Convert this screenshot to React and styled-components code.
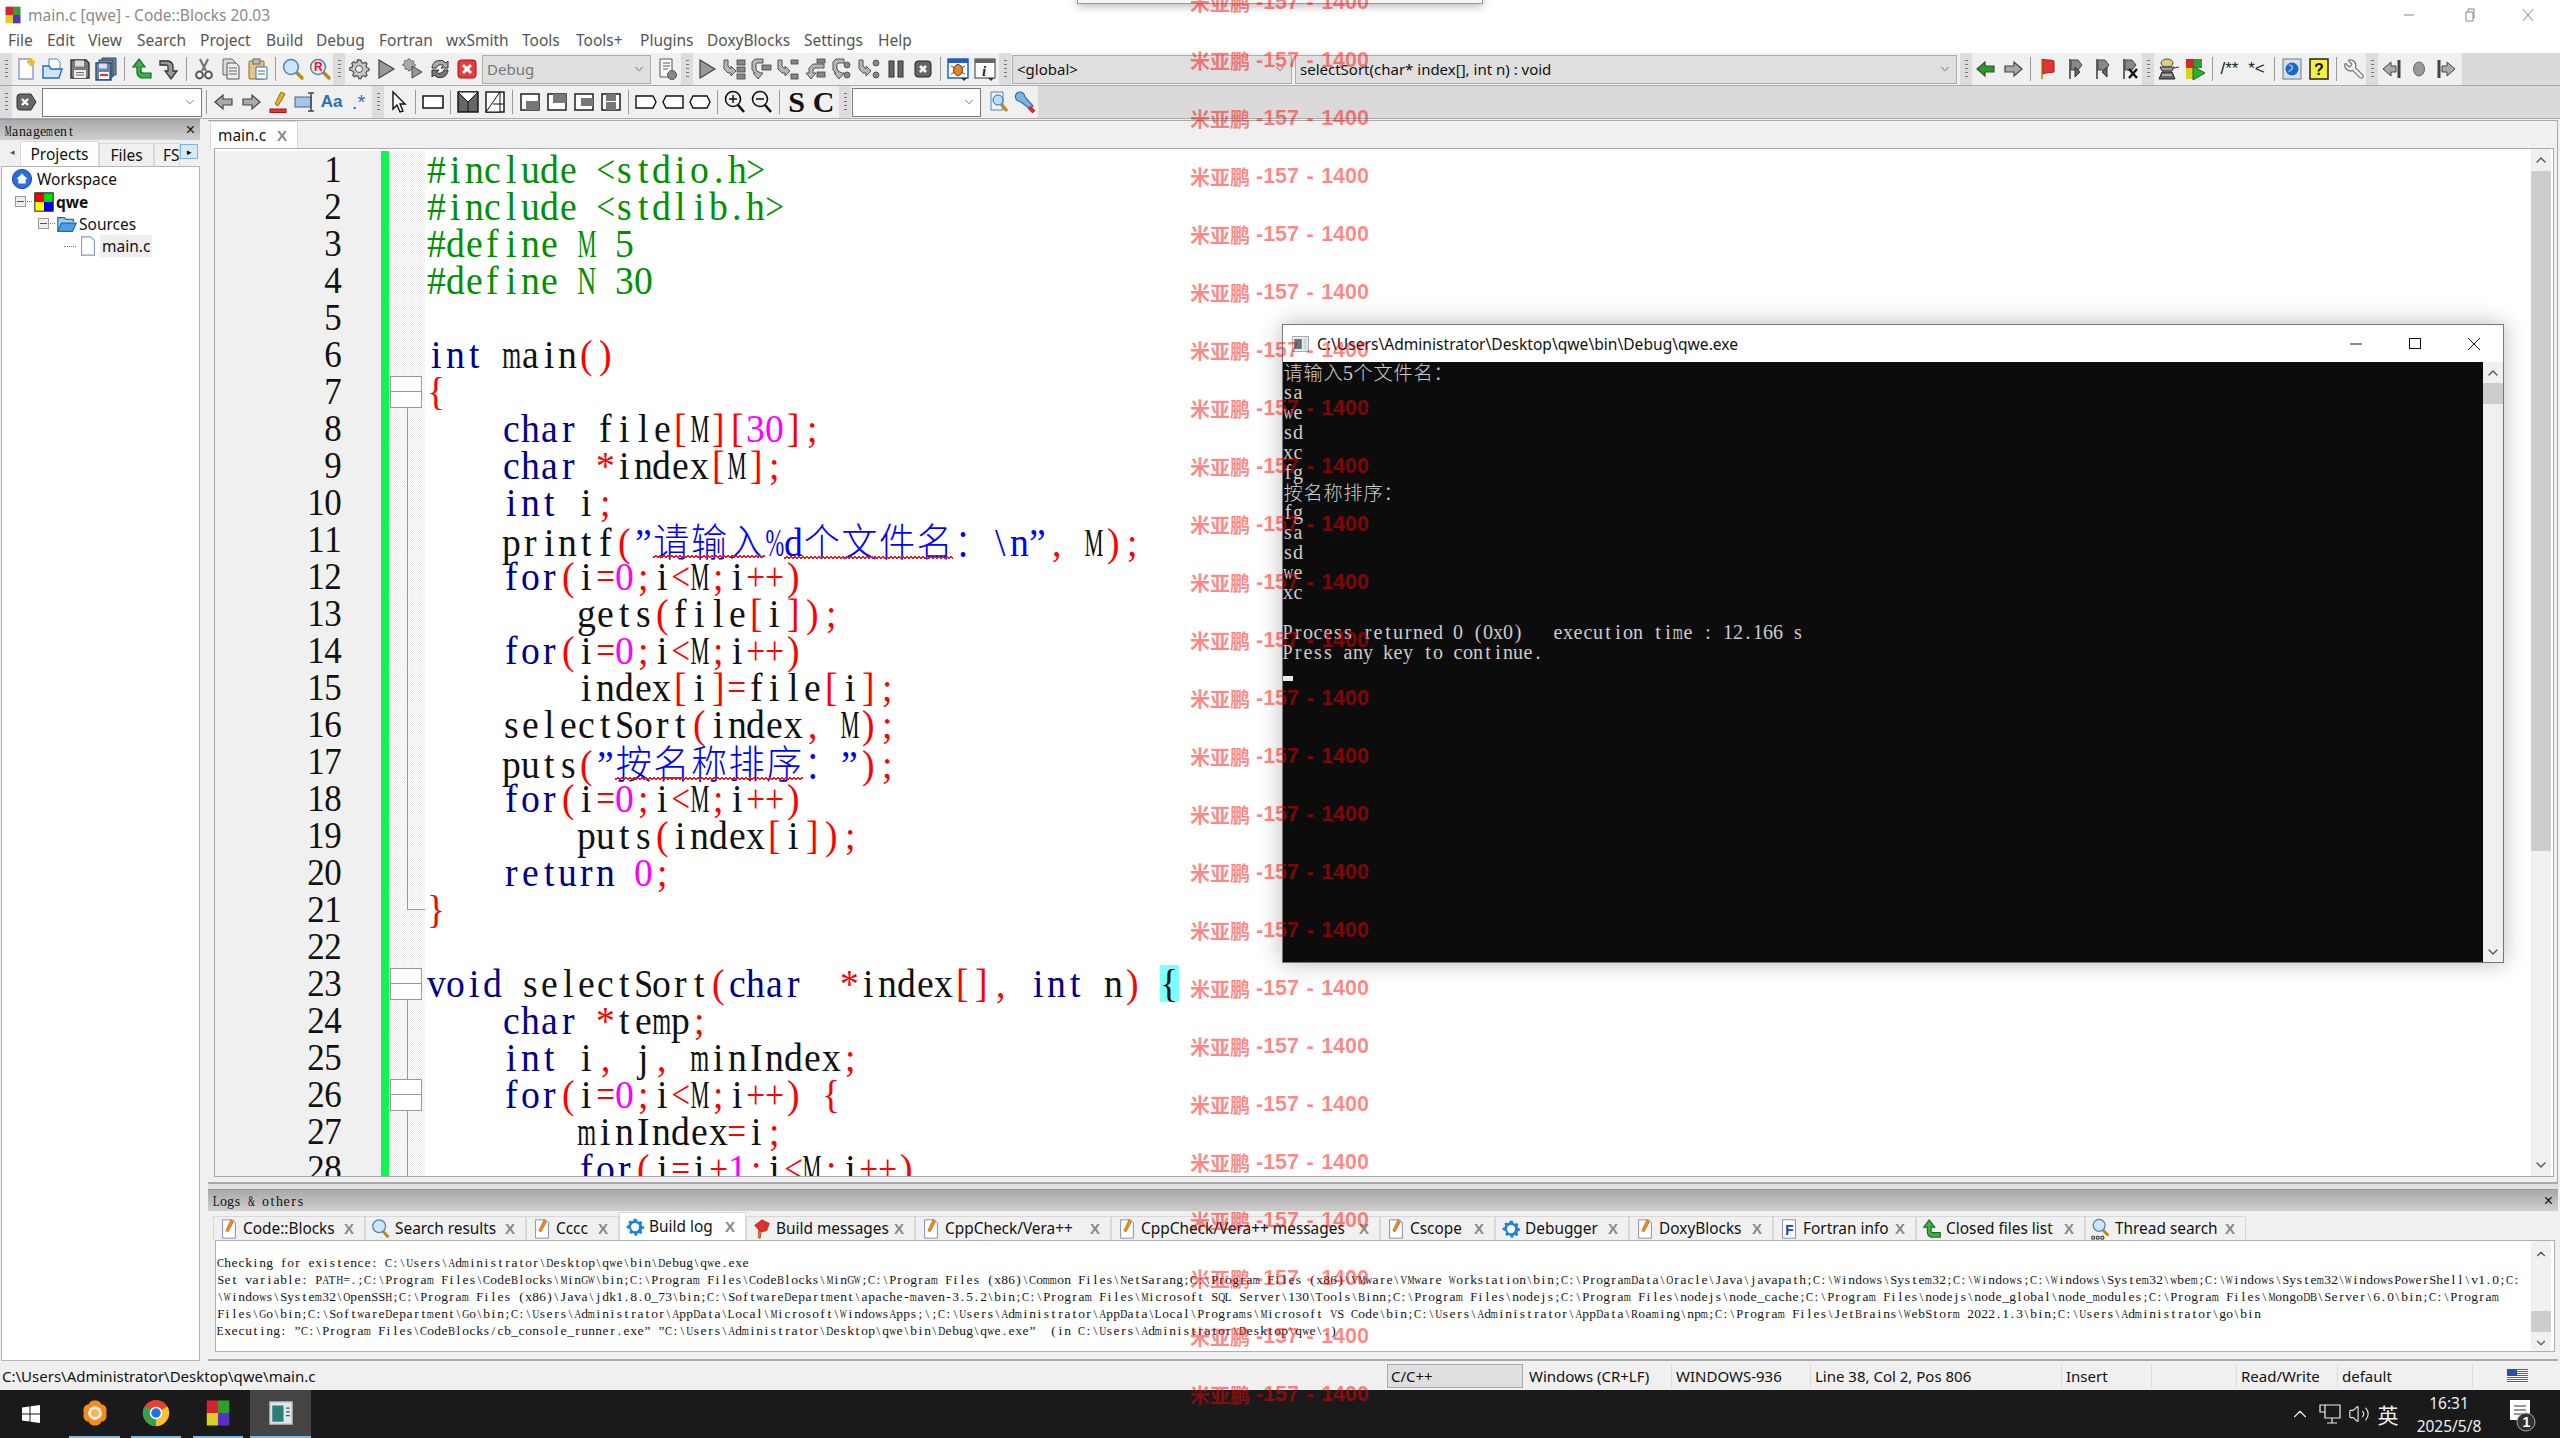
import React from 'react';
import styled, { createGlobalStyle } from 'styled-components';
import { ChevronDown, ChevronUp, Volume2, Wrench } from 'lucide-react';

const Global = createGlobalStyle`
  html,body{margin:0;padding:0;background:#fff;}
  body{font-family:"Noto Sans","Noto Sans CJK SC",sans-serif;overflow:hidden;}
`;

const Page = styled.div`
  position:relative;
  width:2560px;
  height:1438px;
  overflow:hidden;
  display:flex;
  flex-direction:column;
  background:#f0f0f0;
  color:#111;
`;

const TitleBar = styled.div`
  height:30px;
  background:#fff;
  display:flex;
  align-items:center;
  padding-left:3px;
  gap:5px;
  font-size:15.5px;
  color:#8a8a8a;
`;
const TitleText = styled.span`flex:1;`;
const WinBtn = styled.span`
  width:${p => p.$w}px;
  display:flex;
  justify-content:center;
  color:#888;
`;
const MenuBar = styled.div`
  height:23px;
  background:#fff;
  display:flex;
  align-items:center;
  font-size:15.5px;
  color:#555;
  padding-bottom:3px;
  box-sizing:border-box;
`;
const MenuItem = styled.span`
  width:${p => p.$w}px;
  &:first-child{margin-left:8px;}
`;

const ToolRow = styled.div`
  height:33px;
  background:#dadada;
  display:flex;
  border-bottom:1px solid #aaa;
  box-sizing:border-box;
`;
const ToolGroup = styled.div`
  display:flex;
  align-items:center;
  background:#f0f0f0;
  width:${p => p.$w}px;
`;
const Grip = styled.span`
  flex:none;
  width:${p => p.$w || 12}px;
  align-self:stretch;
  background:#dcdcdc;
  display:flex;
  align-items:center;
  justify-content:center;
  &::before{
    content:"";
    width:3px;
    height:18px;
    background:repeating-linear-gradient(#777 0 1.5px,transparent 1.5px 4px);
  }
`;
const Slot = styled.span`
  flex:none;
  width:27px;
  height:100%;
  display:flex;
  align-items:center;
  justify-content:center;
  font-family:"Liberation Serif",serif;
  margin-left:${p => p.$ml || 0}px;
`;
const SlotText = styled(Slot)`
  font-family:"Liberation Sans",sans-serif;
  font-size:17px;
  color:#222;
`;
const Spacer = styled.span`
  flex:none;
  width:${p => p.$w}px;
`;
const Sep = styled.span`
  flex:none;
  width:8px;
  display:flex;
  justify-content:center;
  &::before{content:"";width:1px;height:24px;background:#999;}
`;
const Combo = styled.div`
  flex:none;
  box-sizing:border-box;
  width:${p => p.$w}px;
  height:29px;
  margin-left:${p => p.$ml || 0}px;
  border:1px solid ${p => p.$white ? '#7a7a7a' : '#adadad'};
  background:${p => p.$white ? '#fff' : '#dfdfdf'};
  color:${p => p.$dim ? '#777' : '#111'};
  display:flex;
  align-items:center;
  padding:0 4px;
  font-size:15px;
  white-space:pre;
  span{flex:1;}
`;

const Main = styled.div`
  flex:1;
  display:flex;
  min-height:0;
`;
const LeftPanel = styled.div`
  flex:none;
  width:208px;
  box-sizing:border-box;
  padding:0 8px 1px 0;
  display:flex;
  flex-direction:column;
`;
const PaneHead = styled.div`
  height:${p => p.$h || 21}px;
  flex:none;
  display:flex;
  align-items:center;
  justify-content:space-between;
  padding:0 5px;
  background:linear-gradient(#a9a9a9,#cfcfcf);
  border-top:1px solid #999;
  box-sizing:border-box;
`;
const PaneClose = styled.span`
  font:16px "Liberation Sans",sans-serif;
  color:#111;
`;
const LeftTabs = styled.div`
  position:relative;
  height:26px;
  flex:none;
  display:flex;
  align-items:flex-end;
  padding-left:20px;
  font-size:15.5px;
`;
const LeftTab = styled.span`
  box-sizing:border-box;
  width:${p => p.$w}px;
  height:${p => p.$active ? 25 : 23}px;
  flex:none;
  overflow:hidden;
  display:flex;
  align-items:center;
  justify-content:${p => p.$start ? 'flex-start' : 'center'};
  padding-left:${p => p.$start ? 8 : 0}px;
  background:${p => p.$active ? '#fff' : '#f0f0f0'};
  border:1px solid #d9d9d9;
  border-bottom:0;
`;
const TabArrow = styled.span`
  position:absolute;
  top:4px;
  left:${p => p.$x}px;
  width:${p => p.$hot ? 18 : 16}px;
  height:15px;
  display:flex;
  align-items:center;
  justify-content:center;
  font-size:9px;
  color:${p => p.$hot ? '#000' : '#555'};
  background:${p => p.$hot ? '#d8eafa' : 'transparent'};
  border:1px solid ${p => p.$hot ? '#7db4e6' : 'transparent'};
  box-sizing:border-box;
`;
const Tree = styled.div`
  flex:1;
  margin:0 0 0 1px;
  background:#fff;
  border:1px solid #b5b5b5;
  padding-top:1px;
  font-size:15.5px;
  min-height:0;
`;
const TreeRow = styled.div`
  height:22.4px;
  display:flex;
  align-items:center;
  gap:${p => p.$gap || 2}px;
  padding-left:${p => p.$indent}px;
`;
const Expander = styled.span`
  width:11px;
  height:11px;
  box-sizing:border-box;
  flex:none;
  border:1px solid #999;
  background:linear-gradient(#555,#555) center/7px 1px no-repeat,#eee;
`;
const Dots = styled.span`
  width:${p => p.$w}px;
  flex:none;
  border-top:1px dotted #777;
`;
const Selected = styled.span`
  background:#eee;
  padding:0 2px;
`;

const RightColumn = styled.div`
  flex:1;
  min-width:0;
  display:flex;
  flex-direction:column;
  padding:1px 1px 1px 0;
`;
const Notebook = styled.div`
  flex:none;
  height:1064px;
  display:flex;
  flex-direction:column;
  border-right:1px solid #aaa;
  border-bottom:2px solid #aaa;
  border-top:1px solid #aaa;
  box-sizing:border-box;
  margin-right:1px;
`;
const EditorTabs = styled.div`
  height:27px;
  flex:none;
  display:flex;
  padding-left:2px;
`;
const DocTab = styled.div`
  box-sizing:border-box;
  width:${p => p.$w}px;
  height:${p => p.$active ? 28 : 24}px;
  margin-top:${p => p.$active ? 0 : 3}px;
  flex:none;
  display:flex;
  align-items:center;
  padding-left:${p => p.$pl || 4}px;
  gap:3px;
  font-size:15.4px;
  white-space:pre;
  background:${p => p.$active ? '#fff' : '#f0f0f0'};
  border:1px solid #d8d8d8;
  border-bottom:0;
  overflow:hidden;
  span.label{flex:1;}
`;
const TabX = styled.b`
  font:bold 15px "Liberation Sans",sans-serif;
  color:#888;
  margin-right:10px;
`;
const EditorFrame = styled.div`
  flex:1;
  min-height:0;
  margin:0 3px 5px 6px;
  border:1px solid #aaa;
  display:flex;
  background:#fff;
`;
const CodeArea = styled.div`
  flex:1;
  min-width:0;
  overflow:hidden;
  padding-top:2px;
`;
const CodeRow = styled.div`
  height:37px;
  display:grid;
  grid-template-columns:166px 8px 36px 1fr;
`;
const LineNo = styled.div`
  background:#f0f0f0;
  display:flex;
  justify-content:flex-end;
  padding-right:39px;
`;
const Change = styled.div`background:#10f550;`;
const lineGrad = 'linear-gradient(#999,#999)';
const foldBg = {
  none: '',
  line: `${lineGrad} center/1px 100% no-repeat,`,
  top: `${lineGrad} center bottom/1px 50% no-repeat,`,
  end: `${lineGrad} center top/1px 50% no-repeat,${lineGrad} right center/50% 1px no-repeat,`,
};
const Fold = styled.div`
  display:flex;
  align-items:center;
  justify-content:flex-start;
  padding-left:1px;
  background:${p => foldBg[p.$kind]}conic-gradient(#ececec 25%,#fff 0 50%,#ececec 0 75%,#fff 0) 0 0/2px 2px;
`;
const FoldBox = styled.span`
  width:30px;
  height:30px;
  border:1px solid #999;
  background:${lineGrad} center/100% 1px no-repeat,#fff;
`;
const CodeLine = styled.div`
  padding-left:2px;
  white-space:pre;
  height:37px;
`;
const Cell = styled.span`
  display:inline-flex;
  justify-content:center;
  flex:none;
  width:${p => p.$w}px;
  height:${p => p.$lh}px;
  line-height:${p => p.$lh}px;
  font-family:${p => p.$cjk ? '"Noto Sans CJK SC"' : '"Liberation Serif"'},serif;
  font-weight:${p => p.$cjk ? 300 : 400};
  font-size:${p => p.$size}px;
  white-space:pre;
  color:${p => p.$color};
  background:${p => p.$bg || 'transparent'};
  & > i{
    display:block;
    font-style:normal;
    transform:scale(${p => p.$sx},${p => p.$sy});
  }
`;
const Squiggle = styled.span`
  position:relative;
  display:inline-block;
  &::after{
    content:"";
    position:absolute;
    left:0;
    right:0;
    bottom:2px;
    height:3px;
    background:
      linear-gradient(135deg,transparent 40%,#e02020 40% 60%,transparent 60%) 0 0/4px 3px,
      linear-gradient(45deg,transparent 40%,#e02020 40% 60%,transparent 60%) 2px 0/4px 3px;
  }
`;
const VScroll = styled.div`
  flex:none;
  width:${p => p.$w || 20}px;
  background:#f0f0f0;
  display:flex;
  flex-direction:column;
  align-items:stretch;
  color:#555;
  margin-right:${p => p.$mr || 0}px;
`;
const ScrollEnd = styled.div`
  height:${p => p.$h}px;
  flex:none;
  display:flex;
  align-items:center;
  justify-content:center;
`;
const ScrollGap = styled.div`
  height:${p => p.$h}px;
  flex:${p => p.$h ? 'none' : 1};
`;
const Thumb = styled.div`
  height:${p => p.$h}px;
  flex:none;
  background:#cdcdcd;
`;

const Sash = styled.div`height:5px;flex:none;background:#e0e0e0;`;
const LogsPanel = styled.div`
  flex:1;
  min-height:0;
  display:flex;
  flex-direction:column;
  border-bottom:2px solid #aaa;
  margin-right:1px;
`;
const LogTabs = styled.div`
  height:29px;
  flex:none;
  display:flex;
  padding-left:5px;
  align-items:flex-end;
`;
const LogFrame = styled.div`
  flex:1;
  min-height:0;
  margin:0 3px 7px 7px;
  border:1px solid #b0b0b0;
  background:#fff;
  display:flex;
`;
const LogBody = styled.div`
  flex:1;
  min-width:0;
  padding:9px 0 0 1px;
`;
const LogLine = styled.div`
  height:17px;
  white-space:pre;
`;

const StatusBar = styled.div`
  height:28px;
  flex:none;
  display:flex;
  align-items:center;
  font-size:15px;
  background:#f0f0f0;
  white-space:pre;
`;
const StatusCell = styled.div`
  box-sizing:border-box;
  width:${p => p.$w}px;
  height:24px;
  flex:none;
  display:flex;
  align-items:center;
  padding-left:${p => p.$pl ?? 4}px;
  margin-left:${p => p.$ml || 0}px;
  border-right:${p => p.$bare ? 0 : '1px solid #dcdcdc'};
  ${p => p.$box && 'background:#dfdfdf;border:1px solid #aaa;'}
`;

const Taskbar = styled.div`
  height:48px;
  flex:none;
  background:#1a1a1a;
  display:flex;
  align-items:stretch;
  color:#eee;
`;
const TaskBtn = styled.div`
  box-sizing:border-box;
  flex:none;
  width:${p => p.$w}px;
  margin-left:${p => p.$ml || 0}px;
  display:flex;
  align-items:center;
  justify-content:center;
  background:${p => p.$active ? '#444' : 'transparent'};
  border-bottom:${p => p.$line ? '2px solid #76b9ed' : '0'};
`;
const Tray = styled.div`
  margin-left:auto;
  display:flex;
  align-items:center;
`;
const TrayItem = styled.span`
  width:${p => p.$w}px;
  flex:none;
  display:flex;
  align-items:center;
  justify-content:center;
  font-size:${p => p.$fs || 15}px;
`;
const Clock = styled.div`
  width:92px;
  flex:none;
  display:flex;
  flex-direction:column;
  align-items:center;
  gap:3px;
  font:15.5px/20px "Noto Sans",sans-serif;
`;

const ConsoleWin = styled.div`
  position:absolute;
  left:1282px;
  top:324px;
  width:1222px;
  height:639px;
  box-sizing:border-box;
  border:1px solid #777;
  background:#fff;
  box-shadow:0 0 22px rgba(0,0,0,.28);
  display:flex;
  flex-direction:column;
`;
const ConsoleTitle = styled.div`
  height:37px;
  flex:none;
  display:flex;
  align-items:center;
  padding:0 3px 0 8px;
  gap:6px;
  font-size:15.6px;
  span.t{flex:1;}
`;
const CapBtn = styled.span`
  width:53px;
  display:flex;
  justify-content:center;
  flex:none;
`;
const ConsoleBody = styled.div`
  flex:1;
  min-height:0;
  display:flex;
`;
const ConsoleText = styled.div`
  flex:1;
  background:#0c0c0c;
  padding-top:0;
`;
const ConsoleLine = styled.div`
  height:20px;
  white-space:pre;
`;
const Cursor = styled.div`
  width:10px;
  height:5px;
  background:#e8e8e8;
  margin-top:14px;
`;

const Marks = styled.div`
  position:absolute;
  left:1190px;
  top:-27px;
  display:flex;
  flex-direction:column;
  pointer-events:none;
`;
const Mark = styled.div`
  height:58px;
  display:flex;
  align-items:center;
  white-space:pre;
  font:bold 20px "Noto Sans CJK SC",sans-serif;
  color:rgba(255,0,0,.48);
`;
const MarkNum = styled.span`
  font:bold 21.5px "Liberation Sans",sans-serif;
  word-spacing:1.5px;
  margin-left:6px;
`;
const PeekWindow = styled.div`
  position:absolute;
  left:1077px;
  top:-6px;
  width:404px;
  height:8px;
  background:#f4f4f4;
  border:1px solid #999;
  box-shadow:0 2px 8px rgba(0,0,0,.3);
`;

// Times advance widths (in em) for everything wider than half an em
const ADV = {
  A:.722,B:.667,C:.667,D:.722,E:.611,F:.556,G:.722,H:.722,K:.722,L:.611,M:.889,N:.722,O:.722,P:.556,Q:.722,R:.667,S:.556,T:.611,U:.722,V:.722,W:.944,X:.722,Y:.722,Z:.611,
  m:.778,w:.722,'%':.833,'&':.778,'<':.564,'>':.564,'=':.564,'+':.564,
};
const isWide = ch => ch.charCodeAt(0) > 0x2e7f;

function Mono({ text, cell, size, lh, sy = 1, color = '#111', bg }) {
  return Array.from(text).map((ch, i) => {
    const wide = isWide(ch);
    const w = wide ? cell * 2 : cell;
    const fs = wide ? cell * 1.92 : size;
    const sx = wide ? 1 : Math.min(1, cell / (size * (ADV[ch] || .5)));
    return (
      <Cell key={i} $w={w} $lh={lh} $size={fs} $cjk={wide} $sx={sx.toFixed(2)} $sy={sy} $color={color} $bg={bg}>
        <i>{ch}</i>
      </Cell>
    );
  });
}

const CODE_CELL = 18.8;
const CODE_SIZE = 38;
const KEYWORDS = ['int', 'char', 'void', 'for', 'return'];
const WAVY = /(请输入|d个文件名|按名称排序)/;

const codeChunk = (text, color, key, bg) => (
  <Mono key={key} text={text} cell={CODE_CELL} size={CODE_SIZE} lh={37} sy={1.06} color={color} bg={bg} />
);

function CodeText({ text }) {
  if (text.startsWith('#')) return codeChunk(text, '#009000', 0);
  const out = [];
  const re = /(”[^”]*”)|([A-Za-z_]\w*)|(\d+)|(\s+)|(.)/g;
  let m;
  let k = 0;
  while ((m = re.exec(text))) {
    k += 1;
    if (m[1]) {
      m[1].split(WAVY).forEach((part, j) => {
        if (!part) return;
        const chunk = codeChunk(part, '#0000ff', `${k}-${j}`);
        out.push(WAVY.test(part) ? <Squiggle key={`${k}-${j}`}>{chunk}</Squiggle> : chunk);
      });
    } else if (m[2]) {
      out.push(codeChunk(m[2], KEYWORDS.includes(m[2]) ? '#00008b' : '#111', k));
    } else if (m[3]) {
      out.push(codeChunk(m[3], '#ff00ff', k));
    } else if (m[4]) {
      out.push(codeChunk(m[4], '#111', k));
    } else if (text.endsWith('n) {') && m[5] === '{') {
      out.push(codeChunk('{', '#111', k, '#80ffff'));
    } else {
      out.push(codeChunk(m[5], '#ff0000', k));
    }
  }
  return out;
}

const CODE = [
  '#include <stdio.h>',
  '#include <stdlib.h>',
  '#define M 5',
  '#define N 30',
  '',
  'int main()',
  '{',
  '    char file[M][30];',
  '    char *index[M];',
  '    int i;',
  '    printf(”请输入%d个文件名：\\n”, M);',
  '    for(i=0;i<M;i++)',
  '        gets(file[i]);',
  '    for(i=0;i<M;i++)',
  '        index[i]=file[i];',
  '    selectSort(index, M);',
  '    puts(”按名称排序：”);',
  '    for(i=0;i<M;i++)',
  '        puts(index[i]);',
  '    return 0;',
  '}',
  '',
  'void selectSort(char  *index[], int n) {',
  '    char *temp;',
  '    int i, j, minIndex;',
  '    for(i=0;i<M;i++) {',
  '        minIndex=i;',
  '        for(j=i+1;j<M;j++)',
];
const foldKind = i => {
  const n = i + 1;
  if (n === 7 || n === 23) return 'top';
  if (n === 21) return 'end';
  if (n === 26) return 'line';
  if ((n > 7 && n < 21) || n > 23) return 'line';
  return 'none';
};
const hasBox = i => [7, 23, 26].includes(i + 1);

const CONSOLE = [
  '请输入5个文件名：', 'sa', 'we', 'sd', 'xc', 'fg', '按名称排序：', 'fg', 'sa', 'sd', 'we', 'xc', '',
  'Process returned 0 (0x0)   execution time : 12.166 s',
  'Press any key to continue.',
];

const LOG = [
  'Checking for existence: C:\\Users\\Administrator\\Desktop\\qwe\\bin\\Debug\\qwe.exe',
  'Set variable: PATH=.;C:\\Program Files\\CodeBlocks\\MinGW\\bin;C:\\Program Files\\CodeBlocks\\MinGW;C:\\Program Files (x86)\\Common Files\\NetSarang;C:\\Program Files (x86)\\VMware\\VMware Workstation\\bin;C:\\ProgramData\\Oracle\\Java\\javapath;C:\\Windows\\System32;C:\\Windows;C:\\Windows\\System32\\wbem;C:\\Windows\\System32\\WindowsPowerShell\\v1.0;C:',
  '\\Windows\\System32\\OpenSSH;C:\\Program Files (x86)\\Java\\jdk1.8.0_73\\bin;C:\\SoftwareDepartment\\apache-maven-3.5.2\\bin;C:\\Program Files\\Microsoft SQL Server\\130\\Tools\\Binn;C:\\Program Files\\nodejs;C:\\Program Files\\nodejs\\node_cache;C:\\Program Files\\nodejs\\node_global\\node_modules;C:\\Program Files\\MongoDB\\Server\\6.0\\bin;C:\\Program',
  'Files\\Go\\bin;C:\\SoftwareDepartment\\Go\\bin;C:\\Users\\Administrator\\AppData\\Local\\Microsoft\\WindowsApps;\\;C:\\Users\\Administrator\\AppData\\Local\\Programs\\Microsoft VS Code\\bin;C:\\Users\\Administrator\\AppData\\Roaming\\npm;C:\\Program Files\\JetBrains\\WebStorm 2022.1.3\\bin;C:\\Users\\Administrator\\go\\bin',
  'Executing: ”C:\\Program Files\\CodeBlocks/cb_console_runner.exe” ”C:\\Users\\Administrator\\Desktop\\qwe\\bin\\Debug\\qwe.exe”  (in C:\\Users\\Administrator\\Desktop\\qwe\\.)',
];

const Svg = ({ s = 24, children }) => <svg width={s} height={s} viewBox="0 0 24 24" fill="none">{children}</svg>;

const cbLogo = s => (
  <Svg s={s}>
    <rect x="3" y="2" width="9" height="10" fill="#d8232a" />
    <rect x="12" y="2" width="9" height="10" fill="#2f9e2f" />
    <rect x="3" y="12" width="9" height="10" fill="#d9d021" />
    <rect x="12" y="12" width="9" height="10" fill="#5a2fc2" />
  </Svg>
);
const gearPath = 'M12 3l2 .4.6 2.2 1.8.8 2-1 1.6 1.6-1 2 .8 1.8 2.2.6v2.2l-2.2.6-.8 1.8 1 2-1.6 1.6-2-1-1.8.8-.6 2.2h-2.2l-.6-2.2-1.8-.8-2 1-1.6-1.6 1-2-.8-1.8L2.8 13v-2.2l2.2-.6.8-1.8-1-2 1.6-1.6 2 1 1.8-.8.6-2.2z';
const BENT = 'M2 3h4v6l3 3V9l5 5-5 5v-3l-3 0-4-4z';
const HOOK = 'M14 2H6L3 5v8l3 3H4l5 6 5-6h-2l-4-2-1-2V7l1-1h6z';
const bits = (list) => list.map(([x, y, w, h, r], i) => (
  <rect key={i} x={x} y={y} width={w} height={h} rx={r || 0} fill="#888" stroke="#444" strokeWidth=".8" />
));
const step = (path, list) => (
  <Svg>
    <path d={path} fill="#b5b5b5" stroke="#555" />
    {bits(list)}
  </Svg>
);
const magnifier = (extra, lens = '#cfe6fa') => (
  <Svg>
    <path d="M14 14l7 7" stroke="#b88a1c" strokeWidth="3.4" strokeLinecap="round" />
    <circle cx="10" cy="10" r="7.4" fill={lens} stroke="#4b87b8" strokeWidth="1.5" />
    {extra}
  </Svg>
);
const grayFlag = (extra) => (
  <Svg>
    <path d="M7 2v20" stroke="#444" strokeWidth="1.6" />
    <path d="M8 3h7l4 5-4 5H8z" fill="#888" stroke="#444" />
    {extra}
  </Svg>
);
const frameBtn = (children) => (
  <Svg>
    <rect x="3" y="4" width="18" height="16" fill="#fff" stroke="#111" strokeWidth="1.4" />
    {children}
  </Svg>
);
const arrow = (fill, flip) => (
  <Svg>
    <path d={flip ? 'M21 12l-8-7v4H4v6h9v4z' : 'M3 12l8-7v4h9v6h-9v4z'} fill={fill} stroke="#444" strokeWidth="1.2" />
  </Svg>
);
const SerifBig = styled.span`
  font-size:30px;
  font-weight:700;
  color:#111;
  line-height:1;
`;
const IconText = styled.span`
  font-family:"Liberation Sans",sans-serif;
  font-size:${p => p.$fs}px;
  font-weight:${p => p.$bold ? 700 : 400};
  color:#2a6fb3;
`;
const GrayWrench = styled(Wrench)`
  transform:scaleX(-1);
`;

const ICONS = {
  new: <Svg><path d="M5 2h10l4 4v16H5z" fill="#fff" stroke="#8d98c2" strokeWidth="1.4" /><path d="M17 1v8M13 5h8" stroke="#e8c21a" strokeWidth="3" /></Svg>,
  open: <Svg><path d="M8 2h8l3 3v8H8z" fill="#fff" stroke="#4d86bf" /><path d="M2 9h6l2 3h11l-3 9H2z" fill="#cfe4f6" stroke="#1f6eb5" strokeWidth="1.4" /></Svg>,
  save: <Svg><path d="M3 3h15l3 3v15H3z" fill="#7a7a7a" stroke="#333" strokeWidth="1.4" /><rect x="7" y="3.5" width="9" height="6" fill="#ddd" /><rect x="6" y="13" width="12" height="8" fill="#eee" /><path d="M8 15.5h8M8 18h8" stroke="#666" /></Svg>,
  saveall: <Svg><path d="M7 1h14v17H7z" fill="#789" stroke="#2e4d6e" /><path d="M4 3h14v17H4z" fill="#789" stroke="#2e4d6e" /><path d="M1 6h15v17H1z" fill="#6a86a6" stroke="#2e4d6e" strokeWidth="1.4" /><rect x="4" y="6.5" width="8" height="5" fill="#dde" /><rect x="4" y="15" width="10" height="7" fill="#fff" /><path d="M5 18h8" stroke="#d33" strokeWidth="2" /></Svg>,
  undo: <Svg><path d="M9 2l-6 8h4v6c0 3 3 5 5 5h9v-5h-8c-1 0-2-1-2-2v-4h4z" fill="#3cae48" stroke="#146b22" strokeWidth="1.2" /></Svg>,
  redo: <Svg><path d="M3 4h8c3 0 5 3 5 5v5h4l-6 8-6-8h3V9c0-1-1-1-2-1H3z" fill="#999" stroke="#333" strokeWidth="1.3" /></Svg>,
  cut: <Svg><path d="M8 2l6 12M16 2l-6 12" stroke="#777" strokeWidth="2.2" /><circle cx="7.5" cy="18" r="3.4" stroke="#555" strokeWidth="2" fill="#fff" /><circle cx="16.5" cy="18" r="3.4" stroke="#555" strokeWidth="2" fill="#fff" /></Svg>,
  copy: <Svg><path d="M4 2h9l3 3v13H4z" fill="#ddd" stroke="#666" /><path d="M8 6h9l3 3v13H8z" fill="#eee" stroke="#555" /><path d="M10 11h8M10 14h8M10 17h8" stroke="#666" /></Svg>,
  paste: <Svg><rect x="3" y="4" width="15" height="18" rx="1" fill="#e5c487" stroke="#8a6d2f" /><rect x="7" y="2" width="7" height="5" fill="#bbb" stroke="#666" /><path d="M10 10h11v12H10z" fill="#fff" stroke="#3b6fa5" /><path d="M12 14h7M12 17h7" stroke="#3b6fa5" /></Svg>,
  find: magnifier(),
  replace: magnifier(<text x="6" y="14" fontSize="12" fontWeight="700" fill="#d22" fontFamily="Liberation Sans">R</text>, '#f4e6e6'),
  gear: <Svg><path d={gearPath} fill="#c8c8c8" stroke="#555" strokeWidth="1.3" /><circle cx="12" cy="12" r="3.5" fill="#f0f0f0" stroke="#555" /></Svg>,
  play: <Svg><path d="M5 3l15 9-15 9z" fill="#9a9a9a" stroke="#444" strokeWidth="1.2" /></Svg>,
  buildrun: <Svg><g transform="scale(.65)"><path d={gearPath} fill="#aaa" stroke="#444" /></g><path d="M11 9l10 6-10 6z" fill="#999" stroke="#444" /></Svg>,
  rebuild: <Svg><path d="M4 11a8 8 0 0 1 14-5l2-2v7h-7l2.500-2.500A5 5 0 0 0 8 11z" fill="#aaa" stroke="#333" /><path d="M20 13a8 8 0 0 1-14 5l-2 2v-7h7l-2.500 2.500A5 5 0 0 0 16 13z" fill="#777" stroke="#333" /></Svg>,
  stop: <Svg><rect x="3" y="3" width="18" height="18" rx="3" fill="#e63c3c" stroke="#a11" /><path d="M8 8l8 8M16 8l-8 8" stroke="#fff" strokeWidth="3" /></Svg>,
  log: <Svg><path d="M5 2h12v18H5z" fill="#fff" stroke="#555" /><path d="M8 6h7M8 9h7M8 12h5" stroke="#555" /><circle cx="17" cy="18" r="4.500" fill="#888" stroke="#555" /></Svg>,
  s1: step(BENT, [[15, 3, 8, 5], [15, 10, 8, 5], [15, 17, 8, 5]]),
  s2: step(HOOK, [[13, 8, 9, 5]]),
  s3: step(BENT, [[15, 3, 7, 4], [15, 17, 7, 5]]),
  s4: step('M21 7H10L6 11v5H3l5 6 5-6h-3v-4l2-1h9z', [[14, 2, 8, 4], [14, 15, 8, 5]]),
  s5: step(HOOK, [[14, 5, 6, 6, 3], [14, 15, 6, 6, 3]]),
  s6: step(BENT, [[16, 3, 6, 6, 3], [16, 15, 6, 6, 3]]),
  pause: <Svg><rect x="5" y="4" width="5" height="16" fill="#666" stroke="#333" /><rect x="14" y="4" width="5" height="16" fill="#666" stroke="#333" /></Svg>,
  dstop: <Svg><rect x="4" y="4" width="16" height="16" rx="3" fill="#666" stroke="#222" /><path d="M9 9l6 6M15 9l-6 6" stroke="#fff" strokeWidth="2.6" /></Svg>,
  bug: <Svg><rect x="2" y="2" width="20" height="19" fill="#fff" stroke="#1d5fc4" strokeWidth="1.5" /><rect x="2" y="2" width="20" height="4" fill="#1d5fc4" /><ellipse cx="12" cy="13" rx="4.500" ry="5.500" fill="#e18628" stroke="#7c4610" /><path d="M5 9l4 2M19 9l-4 2M5 17l4-2M19 17l-4-2" stroke="#7c4610" /><path d="M15 21h6l-3 3z" fill="#333" /></Svg>,
  info: <Svg><rect x="2" y="2" width="20" height="19" fill="#fff" stroke="#555" strokeWidth="1.2" /><rect x="2" y="2" width="20" height="4" fill="#666" /><text x="9" y="19" fontSize="15" fontStyle="italic" fontFamily="Liberation Serif" fontWeight="700" fill="#222">i</text><path d="M15 21h6l-3 3z" fill="#333" /></Svg>,
  greenL: arrow('#22a020'),
  grayR: arrow('#aaa', true),
  redFlag: <Svg><path d="M6 2v20" stroke="#c9901e" strokeWidth="1.8" /><path d="M7 2c4 2 7 0 11 2v11c-4 1-7 0-11 2z" fill="#e53232" stroke="#a21" /></Svg>,
  f1: grayFlag(<path d="M12 10l5 5-5 5z" fill="#666" stroke="#333" />),
  f2: grayFlag(<path d="M17 10l-5 5 5 5z" fill="#666" stroke="#333" />),
  f3: grayFlag(<path d="M12 12l8 9M20 12l-8 9" stroke="#111" strokeWidth="2.4" />),
  doxy: <Svg><ellipse cx="11" cy="6" rx="6" ry="4" fill="#e0cf7a" stroke="#444" /><path d="M4 10h14l-2 4h-10z" fill="#999" stroke="#333" /><path d="M18 11l5-1" stroke="#333" /><path d="M6 15h10l3 7H3z" fill="#666" stroke="#222" /><path d="M6 18h10" stroke="#eee" /></Svg>,
  doxyrun: <Svg><rect x="3" y="2" width="8" height="9" fill="#d8232a" /><rect x="11" y="2" width="8" height="9" fill="#2f9e2f" /><rect x="3" y="11" width="8" height="11" fill="#d9d021" /><path d="M10 9l12 7-12 7z" fill="#2fae2f" stroke="#176b17" /></Svg>,
  globe: <Svg><rect x="3" y="2" width="18" height="20" fill="#d6e0ef" stroke="#777" /><circle cx="12" cy="12" r="6.500" fill="#1967c8" /><path d="M9 8c3 0 4 2 3 4s-3 1-3 3" stroke="#8cc4f0" strokeWidth="1.600" /></Svg>,
  help: <Svg><rect x="3" y="2" width="18" height="20" fill="#f7ee3a" stroke="#222" strokeWidth="1.5" /><text x="7" y="18" fontSize="16" fontWeight="700" fontFamily="Liberation Sans" fill="#111">?</text></Svg>,
  wrenchGray: <GrayWrench size={22} strokeWidth={1.3} color="#777" fill="#f2f2f2" />,
  jumpL: <Svg><path d="M19 3v18" stroke="#444" strokeWidth="3" /><path d="M16 12L8 5v4H3v6h5v4z" transform="matrix(-1 0 0 1 19 0)" fill="#aaa" stroke="#444" /></Svg>,
  dot: <Svg><ellipse cx="12" cy="12" rx="5.500" ry="7" fill="#999" stroke="#666" /></Svg>,
  jumpR: <Svg><path d="M5 3v18" stroke="#444" strokeWidth="3" /><path d="M8 12l8-7v4h5v6h-5v4z" transform="matrix(-1 0 0 1 29 0)" fill="#aaa" stroke="#444" /></Svg>,
  xtag: <Svg><path d="M6 4h11l5 8-5 8H6a3 3 0 0 1-3-3V7a3 3 0 0 1 3-3z" fill="#666" stroke="#333" /><path d="M8 9l6 6M14 9l-6 6" stroke="#fff" strokeWidth="2.400" /></Svg>,
  highlight: <Svg><path d="M15 2l4 2-7 12-3-2z" fill="#e8b21f" stroke="#8a6a10" /><rect x="4" y="19" width="16" height="3.500" fill="#e33" stroke="#a11" /></Svg>,
  selection: <Svg><rect x="2" y="7" width="16" height="10" fill="#a9c4e4" stroke="#3f6a9c" /><path d="M15 3h6M18 3v18M15 21h6" stroke="#444" strokeWidth="1.500" /></Svg>,
  aa: <IconText $fs={17} $bold>Aa</IconText>,
  regex: <IconText $fs={20}>.*</IconText>,
  cursor: <Svg><path d="M7 2v17l4-4 3 7 3-1-3-7h5z" fill="#fff" stroke="#111" strokeWidth="1.400" /></Svg>,
  rect: <Svg><rect x="2" y="6" width="20" height="12" fill="#fff" stroke="#111" strokeWidth="1.500" /></Svg>,
  nsd1: <Svg><rect x="2" y="2" width="20" height="20" fill="#666" stroke="#111" strokeWidth="1.400" /><path d="M2 2l10 10L22 2z" fill="#fff" stroke="#111" /><path d="M12 12v10" stroke="#111" /></Svg>,
  nsd2: <Svg><rect x="3" y="2" width="18" height="20" fill="#fff" stroke="#111" strokeWidth="1.400" /><path d="M3 22L17 2v20z" fill="#fff" stroke="#111" /><path d="M10 14h11" stroke="#111" /></Svg>,
  blk1: frameBtn(<rect x="8" y="11" width="13" height="9" fill="#777" />),
  blk2: frameBtn(<rect x="8" y="4" width="13" height="9" fill="#777" />),
  blk3: frameBtn(<rect x="9" y="8" width="12" height="8" fill="#777" />),
  blk4: frameBtn(<><rect x="7" y="4" width="10" height="7" fill="#777" /><rect x="7" y="12" width="10" height="8" fill="#777" /></>),
  hex1: <Svg><path d="M2 6h17l3 6-3 6H2z" fill="#fff" stroke="#111" strokeWidth="1.400" /></Svg>,
  hex2: <Svg><path d="M5 6h17v12H5l-3-6z" fill="#fff" stroke="#111" strokeWidth="1.400" /></Svg>,
  hex3: <Svg><path d="M5 6h14l3 6-3 6H5l-3-6z" fill="#fff" stroke="#111" strokeWidth="1.400" /></Svg>,
  zoomIn: <Svg><circle cx="10" cy="9" r="7.500" stroke="#111" strokeWidth="1.600" /><path d="M15 15l6 7" stroke="#111" strokeWidth="2.600" /><path d="M10 5v8M6 9h8" stroke="#111" strokeWidth="1.500" /></Svg>,
  zoomOut: <Svg><circle cx="10" cy="9" r="7.500" stroke="#111" strokeWidth="1.600" /><path d="M15 15l6 7" stroke="#111" strokeWidth="2.600" /><path d="M6 9h8" stroke="#111" strokeWidth="1.500" /></Svg>,
  S: <SerifBig>S</SerifBig>,
  C: <SerifBig>C</SerifBig>,
  docFind: <Svg><path d="M5 2h12v18H5z" fill="#eaf2fa" stroke="#4b87b8" /><circle cx="12" cy="10" r="5" fill="#bcdcf6" stroke="#2f6fa6" /><path d="M15 14l6 7" stroke="#b88a1c" strokeWidth="3" /></Svg>,
  wrench: <Svg><path d="M4 3a5 5 0 0 0 1 8l3 1 9 7 3-3-8-9-1-3a5 5 0 0 0-7-1z" fill="#7db4e6" stroke="#2a6fb3" strokeWidth="1.200" /><path d="M16 17l5 5" stroke="#d92b2b" strokeWidth="4" /></Svg>,
  greenLG: arrow('#aaa'),
  grayRG: arrow('#aaa', true),
};

const pencil = <Svg s={22}><path d="M5 2h11l3 3v17H5z" fill="#fff" stroke="#7d86b8" /><path d="M14 2l3 2-6 11-2.500-1z" fill="#ef8a1c" stroke="#a75a0a" strokeWidth=".6" /></Svg>;
const blueGear = <Svg s={22}><path d={gearPath} fill="#1e7ee8" /><circle cx="12" cy="12" r="4.500" fill="#fff" /></Svg>;
const redPin = <Svg s={22}><path d="M4 8l8-6 8 4-3 8-6 1-1 7-2-1 .5-8z" fill="#e02f2f" stroke="#911" strokeWidth=".7" /><path d="M10 15l-2 7" stroke="#c9901e" strokeWidth="1.800" /></Svg>;
const lens = <Svg s={22}><path d="M14 14l6 7" stroke="#b88a1c" strokeWidth="3.200" /><circle cx="10" cy="9" r="7" fill="#cfe6fa" stroke="#4b87b8" strokeWidth="1.400" /></Svg>;
const lensDots = <Svg s={22}><path d="M14 13l6 6" stroke="#b88a1c" strokeWidth="3.200" /><circle cx="10" cy="8" r="6.500" fill="#cfe6fa" stroke="#4b87b8" strokeWidth="1.400" /><path d="M2 20h3v3H2zM7 20h3v3H7zM12 20h3v3h-3z" stroke="#222" /></Svg>;
const fortran = <Svg s={22}><rect x="5" y="2" width="14" height="20" fill="#fff" stroke="#7d86b8" /><text x="8" y="18" fontSize="15" fontWeight="700" fontFamily="Liberation Sans" fill="#1a3fb0">F</text></Svg>;
const greenUp = <Svg s={22}><path d="M9 2l-6 8h4v6c0 3 3 5 5 5h9v-5h-8c-1 0-2-1-2-2v-4h4z" fill="#3cae48" stroke="#146b22" strokeWidth="1.200" /></Svg>;

const ROW1 = [
  { w: 333, items: ['new', 'open', 'save', 'saveall', '|', 'undo', 'redo', '|', 'cut', 'copy', 'paste', '|', 'find', 'replace'] },
  { w: 348, items: ['gear', 'play', 'buildrun', 'rebuild', 'stop', { combo: 'Debug', w: 169, ml: 2, dim: true }, { after: 'log' }] },
  { w: 318, items: ['play', 's1', 's2', 's3', 's4', 's5', 's6', 'pause', 'dstop', '|', 'bug', 'info'] },
  { w: 961, items: [{ combo: '<global>', w: 280, ml: 1 }, { combo: 'selectSort(char* index[], int n) : void', w: 662, ml: 3 }] },
  { w: 182, items: ['greenL', 'grayR', '|', 'redFlag', 'f1', 'f2', 'f3'] },
  { w: 224, items: ['doxy', 'doxyrun', '|', { text: '/**' }, { text: '*<' }, '|', 'globe', 'help', '|', 'wrenchGray'] },
  { w: 96, items: ['jumpL', 'dot', 'jumpR'] },
];
const ROW2 = [
  { w: 372, items: ['xtag', { combo: '', w: 160, ml: 3, white: true }, '|', 'greenLG', 'grayRG', 'highlight', 'selection', 'aa', 'regex'] },
  { w: 467, items: ['cursor', '|', 'rect', '|', 'nsd1', 'nsd2', '|', 'blk1', 'blk2', 'blk3', 'blk4', '|', 'hex1', 'hex2', 'hex3', '|', 'zoomIn', 'zoomOut', '|', 'S', 'C'] },
  { w: 199, items: [{ combo: '', w: 129, ml: 1, white: true }, { gap: 3 }, 'docFind', 'wrench'] },
];

function ToolItems({ items }) {
  return items.map((it, i) => {
    if (it === '|') return <Sep key={i} />;
    if (typeof it === 'string') return <Slot key={i}>{ICONS[it]}</Slot>;
    if (it.after) return <Slot key={i} $ml={2}>{ICONS[it.after]}</Slot>;
    if (it.gap) return <Spacer key={i} $w={it.gap} />;
    if (it.text) return <SlotText key={i}>{it.text}</SlotText>;
    return (
      <Combo key={i} $w={it.w} $ml={it.ml} $white={it.white} $dim={it.dim}>
        <span>{it.combo}</span>
        <ChevronDown size={14} strokeWidth={1.2} color="#444" />
      </Combo>
    );
  });
}

const LOG_TABS = [
  { w: 152, icon: pencil, label: 'Code::Blocks' },
  { w: 161, icon: lens, label: 'Search results' },
  { w: 93, icon: pencil, label: 'Cccc' },
  { w: 127, icon: blueGear, label: 'Build log', active: true },
  { w: 169, icon: redPin, label: 'Build messages' },
  { w: 196, icon: pencil, label: 'CppCheck/Vera++' },
  { w: 269, icon: pencil, label: 'CppCheck/Vera++ messages' },
  { w: 115, icon: pencil, label: 'Cscope' },
  { w: 134, icon: blueGear, label: 'Debugger' },
  { w: 144, icon: pencil, label: 'DoxyBlocks' },
  { w: 143, icon: fortran, label: 'Fortran info' },
  { w: 169, icon: greenUp, label: 'Closed files list' },
  { w: 161, icon: lensDots, label: 'Thread search' },
];

const STATUS = [
  { w: 1387, text: 'C:\\Users\\Administrator\\Desktop\\qwe\\main.c', bare: true, pl: 2 },
  { w: 136, text: 'C/C++', box: true, pl: 3 },
  { w: 147, text: 'Windows (CR+LF)', ml: 2 },
  { w: 139, text: 'WINDOWS-936' },
  { w: 251, text: 'Line 38, Col 2, Pos 806' },
  { w: 90, text: 'Insert' },
  { w: 85, text: '' },
  { w: 101, text: 'Read/Write' },
  { w: 135, text: 'default' },
];

const winLogo = <Svg><path d="M3 5.500l7.500-1v7H3zM11.500 4.300L21 3v8.500h-9.500zM3 12.500h7.500v7L3 18.500zM11.500 12.500H21V21l-9.500-1.300z" fill="#fff" /></Svg>;
const flowerApp = <Svg s={30}><path d="M12 2c3 0 4 1 5 3 3 0 5 3 4 7 1 4-1 7-4 7-1 2-2 3-5 3s-4-1-5-3c-3 0-5-3-4-7-1-4 1-7 4-7 1-2 2-3 5-3z" fill="#f58a1f" /><circle cx="12" cy="12" r="5.500" fill="#fff3e0" /><circle cx="12" cy="12" r="3.200" fill="#f8b15c" /></Svg>;
const chrome = (
  <Svg s={30}>
    <circle cx="12" cy="12" r="10.500" fill="#e8412f" />
    <path d="M12 12L2.900 17.250A10.500 10.500 0 0 1 3 6.600z" fill="#2ea44f" />
    <path d="M12 22.500A10.500 10.500 0 0 1 2.900 17.250L12 12z" fill="#2ea44f" />
    <path d="M12 12l9.100-5.250A10.500 10.500 0 0 1 12 22.500z" fill="#fbc02d" />
    <circle cx="12" cy="12" r="5" fill="#fff" />
    <circle cx="12" cy="12" r="3.800" fill="#1a73e8" />
  </Svg>
);
const consoleApp = <Svg s={30}><rect x="3" y="3" width="18" height="18" fill="#dfe8ea" stroke="#aaa" /><rect x="5" y="6" width="9" height="13" fill="#2b7f78" /><path d="M16 8h3M16 11h3M16 14h3" stroke="#557" /></Svg>;
const consoleSmall = <Svg s={20}><rect x="2" y="3" width="19" height="18" fill="#eee" stroke="#999" /><rect x="4" y="6" width="9" height="12" fill="#4c7f88" /><rect x="15" y="5" width="4" height="14" fill="#d0d8dc" /></Svg>;
const capMin = <svg width="14" height="14" viewBox="0 0 14 14"><path d="M1 7h12" stroke="#111" /></svg>;
const capMax = <svg width="14" height="14" viewBox="0 0 14 14"><rect x="1.500" y="1.500" width="11" height="10" fill="none" stroke="#111" /></svg>;
const capClose = <svg width="14" height="14" viewBox="0 0 14 14"><path d="M1 1l12 12M13 1L1 13" stroke="#111" /></svg>;
const flag = (
  <svg width="21" height="14" viewBox="0 0 21 14">
    <rect width="21" height="14" fill="#fff" />
    {[0, 2, 4, 6, 8, 10, 12].map(y => <rect key={y} y={y} width="21" height="1" fill="#e0252c" />)}
    <rect width="10" height="7" fill="#2a4fa8" />
  </svg>
);

export default function App() {
  return (
    <Page>
      <Global />
      <TitleBar>
        {cbLogo(20)}
        <TitleText>main.c [qwe] - Code::Blocks 20.03</TitleText>
        <WinBtn $w={70}><svg width="12" height="12" viewBox="0 0 12 12"><path d="M1 6h10" stroke="#888" /></svg></WinBtn>
        <WinBtn $w={42}><svg width="12" height="14" viewBox="0 0 12 14"><path d="M2 4h7v9H2zM4 4V1h6v9H9" fill="none" stroke="#888" /></svg></WinBtn>
        <WinBtn $w={64}><svg width="14" height="14" viewBox="0 0 14 14"><path d="M2 1l10 12M12 1L2 13" stroke="#888" /></svg></WinBtn>
      </TitleBar>
      <MenuBar>
        {[['File', 39], ['Edit', 41], ['View', 49], ['Search', 63], ['Project', 66], ['Build', 50], ['Debug', 63], ['Fortran', 67], ['wxSmith', 76], ['Tools', 54], ['Tools+', 64], ['Plugins', 67], ['DoxyBlocks', 97], ['Settings', 74], ['Help', 40]].map(([t, w]) => (
          <MenuItem key={t} $w={w}>{t}</MenuItem>
        ))}
      </MenuBar>
      <ToolRow>
        {ROW1.map((g, i) => (
          <ToolGroup key={i} $w={g.w}>
            <Grip />
            <ToolItems items={g.items} />
          </ToolGroup>
        ))}
      </ToolRow>
      <ToolRow>
        {ROW2.map((g, i) => (
          <ToolGroup key={i} $w={g.w}>
            <Grip />
            <ToolItems items={g.items} />
          </ToolGroup>
        ))}
      </ToolRow>
      <Main>
        <LeftPanel>
          <PaneHead>
            <span><Mono text="Management" cell={6.9} size={14} lh={20} /></span>
            <PaneClose>×</PaneClose>
          </PaneHead>
          <LeftTabs>
            <TabArrow $x={4}>◂</TabArrow>
            <LeftTab $w={79} $active>Projects</LeftTab>
            <LeftTab $w={55}>Files</LeftTab>
            <LeftTab $w={26} $start>FS</LeftTab>
            <TabArrow $x={180} $hot>▸</TabArrow>
          </LeftTabs>
          <Tree>
            <TreeRow $indent={9} $gap={4}>
              <Svg s={22}><circle cx="12" cy="12" r="10.500" fill="#2a6fe0" stroke="#123f8f" /><path d="M12 6l6 6h-2v5h-8v-5H6z" fill="#fff" /></Svg>
              <span>Workspace</span>
            </TreeRow>
            <TreeRow $indent={13} $gap={1}>
              <Expander />
              <Dots $w={5} />
              <Svg s={22}>
                <rect x="2" y="2" width="10" height="10" fill="#f00" /><rect x="12" y="2" width="10" height="10" fill="#0d0" />
                <rect x="2" y="12" width="10" height="10" fill="#ff0" /><rect x="12" y="12" width="10" height="10" fill="#00d" />
                <rect x="2" y="2" width="20" height="20" stroke="#111" />
              </Svg>
              <b>qwe</b>
            </TreeRow>
            <TreeRow $indent={36} $gap={1}>
              <Expander />
              <Dots $w={5} />
              <Svg s={22}><path d="M2 20V5h7l2 2h8v3" stroke="#1f6eb5" strokeWidth="1.400" fill="#9fcdf2" /><path d="M2 20l4-9h16l-4 9z" fill="#4f9fe0" stroke="#1f6eb5" strokeWidth="1.400" /></Svg>
              <span>Sources</span>
            </TreeRow>
            <TreeRow $indent={62} $gap={1}>
              <Dots $w={12} />
              <Svg s={22}><path d="M5 2h10l4 4v16H5z" fill="#fff" stroke="#8d98c2" strokeWidth="1.200" /></Svg>
              <Selected>main.c</Selected>
            </TreeRow>
          </Tree>
        </LeftPanel>
        <RightColumn>
          <Notebook>
            <EditorTabs>
              <DocTab $w={88} $active $pl={7}>
                <span className="label">main.c</span>
                <TabX>X</TabX>
              </DocTab>
            </EditorTabs>
            <EditorFrame>
              <CodeArea>
                {CODE.map((line, i) => (
                  <CodeRow key={i}>
                    <LineNo><Mono text={String(i + 1)} cell={17.5} size={36} lh={37} sy={1.06} color="#111" /></LineNo>
                    <Change />
                    <Fold $kind={foldKind(i)}>{hasBox(i) && <FoldBox />}</Fold>
                    <CodeLine><CodeText text={line} /></CodeLine>
                  </CodeRow>
                ))}
              </CodeArea>
              <VScroll $mr={2}>
                <ScrollEnd $h={22}><ChevronUp size={16} /></ScrollEnd>
                <Thumb $h={680} />
                <ScrollGap />
                <ScrollEnd $h={22}><ChevronDown size={16} /></ScrollEnd>
              </VScroll>
            </EditorFrame>
          </Notebook>
          <Sash />
          <LogsPanel>
            <PaneHead $h={22}>
              <span><Mono text="Logs & others" cell={7} size={14} lh={20} /></span>
              <PaneClose>×</PaneClose>
            </PaneHead>
            <LogTabs>
              {LOG_TABS.map(t => (
                <DocTab key={t.label} $w={t.w} $active={t.active}>
                  {t.icon}
                  <span className="label">{t.label}</span>
                  <TabX>X</TabX>
                </DocTab>
              ))}
            </LogTabs>
            <LogFrame>
              <LogBody>
                {LOG.map((l, i) => (
                  <LogLine key={i}><Mono text={l} cell={7} size={13.5} lh={17} /></LogLine>
                ))}
              </LogBody>
              <VScroll $mr={3}>
                <ScrollEnd $h={25}><ChevronUp size={14} /></ScrollEnd>
                <ScrollGap $h={45} />
                <Thumb $h={21} />
                <ScrollGap />
                <ScrollEnd $h={22}><ChevronDown size={14} /></ScrollEnd>
              </VScroll>
            </LogFrame>
          </LogsPanel>
        </RightColumn>
      </Main>
      <StatusBar>
        {STATUS.map((s, i) => (
          <StatusCell key={i} $w={s.w} $pl={s.pl} $ml={s.ml} $bare={s.bare} $box={s.box}>{s.text}</StatusCell>
        ))}
        <StatusCell $w={60} $pl={34} $bare>{flag}</StatusCell>
      </StatusBar>
      <Taskbar>
        <TaskBtn $w={61}>{winLogo}</TaskBtn>
        <TaskBtn $w={51} $ml={8} $line>{flowerApp}</TaskBtn>
        <TaskBtn $w={50} $ml={11} $line>{chrome}</TaskBtn>
        <TaskBtn $w={50} $ml={12} $line>{cbLogo(30)}</TaskBtn>
        <TaskBtn $w={61} $ml={7} $line $active>{consoleApp}</TaskBtn>
        <Tray>
          <TrayItem $w={30}><ChevronUp size={22} strokeWidth={1.2} /></TrayItem>
          <TrayItem $w={30}>
            <svg width="24" height="24" viewBox="0 0 24 24" fill="none"><path d="M7 3h15v13H7zM7 10H2V3h5M14 16v5M9 21h10" stroke="#eee" strokeWidth="1.200" /></svg>
          </TrayItem>
          <TrayItem $w={28}><Volume2 size={22} strokeWidth={1.2} /></TrayItem>
          <TrayItem $w={30} $fs={21}>英</TrayItem>
          <Clock><span>16:31</span><span>2025/5/8</span></Clock>
          <TrayItem $w={50}>
            <svg width="34" height="40" viewBox="0 0 34 40"><path d="M7 6h20v20H7z" fill="#fff" /><path d="M11 12h12M11 16h12M11 20h12" stroke="#333" /><circle cx="23" cy="28" r="9" fill="#333" stroke="#aaa" /><text x="19.500" y="33" fontSize="14" fontWeight="700" fill="#fff" fontFamily="Liberation Sans">1</text></svg>
          </TrayItem>
          <TrayItem $w={15} />
        </Tray>
      </Taskbar>

      <PeekWindow />
      <ConsoleWin>
        <ConsoleTitle>
          {consoleSmall}
          <span className="t">C:\Users\Administrator\Desktop\qwe\bin\Debug\qwe.exe</span>
          <CapBtn>{capMin}</CapBtn>
          <CapBtn>{capMax}</CapBtn>
          <CapBtn>{capClose}</CapBtn>
        </ConsoleTitle>
        <ConsoleBody>
          <ConsoleText>
            {CONSOLE.map((l, i) => (
              <ConsoleLine key={i}><Mono text={l} cell={10} size={20} lh={20} color="#cccccc" /></ConsoleLine>
            ))}
            <Cursor />
          </ConsoleText>
          <VScroll $w={20}>
            <ScrollEnd $h={21}><ChevronUp size={16} /></ScrollEnd>
            <Thumb $h={21} />
            <ScrollGap />
            <ScrollEnd $h={21}><ChevronDown size={16} /></ScrollEnd>
          </VScroll>
        </ConsoleBody>
      </ConsoleWin>

      <Marks>
        {Array.from({ length: 25 }, (_, i) => <Mark key={i}>米亚鹏<MarkNum>-157 - 1400</MarkNum></Mark>)}
      </Marks>
    </Page>
  );
}
